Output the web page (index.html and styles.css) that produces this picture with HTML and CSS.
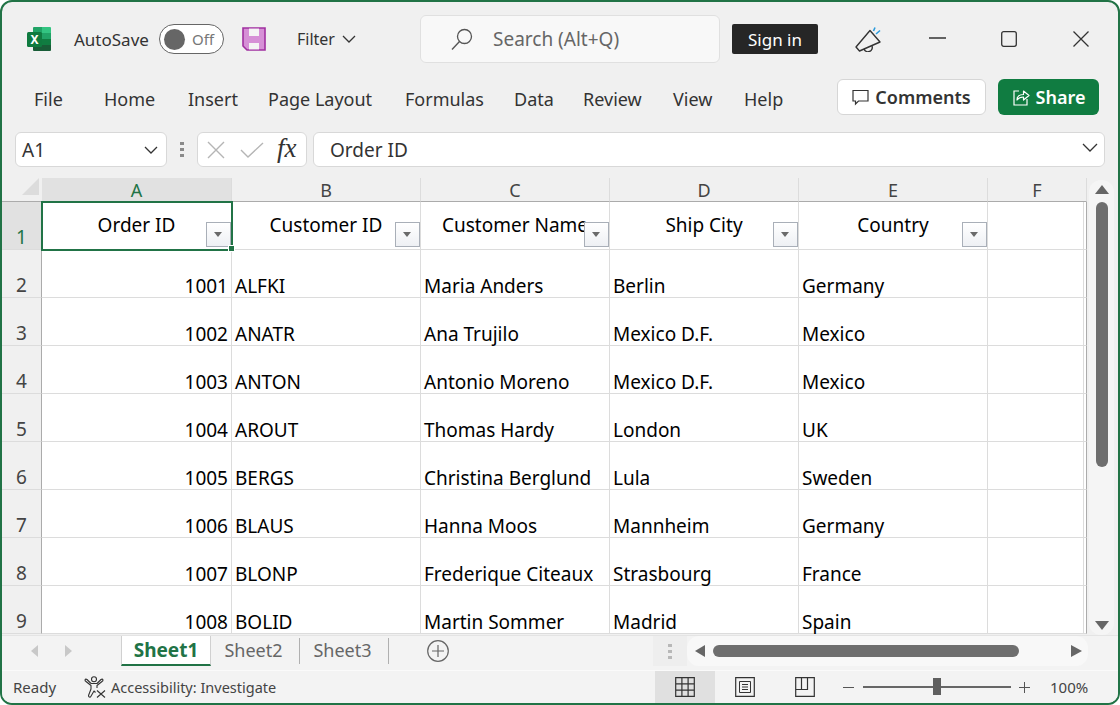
FILE: index.html
```html
<!DOCTYPE html>
<html lang="en">
<head>
    <meta charset="UTF-8">
    <meta name="viewport" content="width=device-width, initial-scale=1.0">
    <title>Excel</title>
    <link rel="stylesheet" href="styles.css">
</head>
<body>
<div class="window">

    <!-- Title bar -->
    <div class="title-bar">
        <svg class="logo" width="24" height="24" viewBox="0 0 24 24">
            <path d="M7 0H15V6H6V1Q6 0 7 0Z" fill="#21a366"/>
            <path d="M15 0H23Q24 0 24 1V6H15Z" fill="#33c481"/>
            <rect x="6" y="6" width="9" height="6" fill="#107c41"/>
            <rect x="15" y="6" width="9" height="6" fill="#21a366"/>
            <rect x="6" y="12" width="9" height="6" fill="#185c37"/>
            <rect x="15" y="12" width="9" height="6" fill="#107c41"/>
            <path d="M6 18H24V23Q24 24 23 24H7Q6 24 6 23Z" fill="#185c37"/>
            <rect x="0" y="5" width="15" height="15" rx="1.5" fill="#0f7a3f"/>
            <text x="7.5" y="17" text-anchor="middle" class="logo-x">X</text>
        </svg>
        <span class="autosave">AutoSave</span>
        <div class="toggle"><span class="toggle-knob"></span><span class="toggle-text">Off</span></div>
        <svg class="save" width="24" height="24" viewBox="0 0 24 24">
            <path d="M1 1H23V23H5L1 19Z" fill="#d690d6" stroke="#a02fa0" stroke-width="1.6"/>
            <rect x="7" y="1.6" width="10" height="7.4" fill="#f4f4f4"/>
            <rect x="7" y="16" width="10" height="6.4" fill="#f4f4f4"/>
        </svg>
        <span class="filter">Filter</span>
        <svg class="filter-arrow" width="14" height="8" viewBox="0 0 14 8"><path d="M1 1L7 7L13 1" fill="none" stroke="#333" stroke-width="1.3"/></svg>
        <div class="search">
            <svg width="22" height="23" viewBox="0 0 22 23"><circle cx="13.5" cy="8.5" r="7" fill="none" stroke="#555" stroke-width="1.3"/><path d="M8.5 13.5L1 21.5" stroke="#555" stroke-width="1.4"/></svg>
            <span>Search (Alt+Q)</span>
        </div>
        <button class="sign-in">Sign in</button>
        <svg class="mega" width="26" height="26" viewBox="0 0 26 26">
            <path d="M15 4.500L25 16L4.500 25L1 21Z" fill="none" stroke="#333" stroke-width="1.4" stroke-linejoin="round"/>
            <path d="M9 23A4 4 0 0 0 17 20" fill="none" stroke="#333" stroke-width="1.4"/>
            <path d="M18.500 5L20 1.500M21 8L25 4.500" stroke="#2b9bdc" stroke-width="1.6"/>
        </svg>
        <svg class="win-min" width="17" height="2" viewBox="0 0 17 2"><path d="M0 1H17" stroke="#333" stroke-width="1.3"/></svg>
        <svg class="win-max" width="16" height="16" viewBox="0 0 16 16"><rect x=".7" y=".7" width="14.6" height="14.6" rx="2" fill="none" stroke="#333" stroke-width="1.3"/></svg>
        <svg class="win-close" width="16" height="16" viewBox="0 0 16 16"><path d="M.5 .5L15.5 15.5M15.5 .5L.5 15.5" stroke="#333" stroke-width="1.3"/></svg>
    </div>

    <!-- Ribbon tabs -->
    <div class="ribbon">
        <span class="tab tab-file">File</span>
        <span class="tab tab-home">Home</span>
        <span class="tab tab-insert">Insert</span>
        <span class="tab tab-layout">Page Layout</span>
        <span class="tab tab-formulas">Formulas</span>
        <span class="tab tab-data">Data</span>
        <span class="tab tab-review">Review</span>
        <span class="tab tab-view">View</span>
        <span class="tab tab-help">Help</span>
        <button class="comments">
            <svg width="17" height="17" viewBox="0 0 17 17"><path d="M1 1.500H16V12H6.500L3.500 15V12H1Z" fill="none" stroke="#333" stroke-width="1.2"/></svg>
            Comments
        </button>
        <button class="share">
            <svg width="18" height="18" viewBox="0 0 18 18"><path d="M7 3H2V17H15V11" fill="none" stroke="#fff" stroke-width="1.2"/><path d="M5 12C5 8 8 6.500 11.500 6.500V3L17 7.500L11.500 12V9C9 9 6.500 10 5 12Z" fill="none" stroke="#fff" stroke-width="1.2" stroke-linejoin="round"/></svg>
            Share
        </button>
    </div>

    <!-- Formula bar -->
    <div class="formula-bar">
        <div class="name-box">
            <span>A1</span>
            <svg width="14" height="8" viewBox="0 0 14 8"><path d="M1 1L7 7L13 1" fill="none" stroke="#333" stroke-width="1.3"/></svg>
        </div>
        <div class="grip"><i></i><i></i><i></i></div>
        <div class="fx-box">
            <svg width="18" height="18" viewBox="0 0 18 18"><path d="M1 1L17 17M17 1L1 17" stroke="#b5b5b5" stroke-width="1.4"/></svg>
            <svg class="fx-check" width="24" height="16" viewBox="0 0 24 16"><path d="M1 8L8 15L23 1" fill="none" stroke="#b5b5b5" stroke-width="1.4"/></svg>
            <span class="fx">fx</span>
        </div>
        <div class="formula-input">
            <span>Order ID</span>
            <svg width="16" height="9" viewBox="0 0 16 9"><path d="M1 1L8 8L15 1" fill="none" stroke="#333" stroke-width="1.3"/></svg>
        </div>
    </div>

    <!-- Sheet -->
    <div class="sheet">
        <div class="grid-wrap">
            <table class="grid">
                <colgroup>
                    <col class="col-row"><col class="col-a"><col class="col-std"><col class="col-std"><col class="col-std"><col class="col-std"><col class="col-f">
                </colgroup>
                <tr class="col-heads">
                    <th class="corner"><span class="corner-mark"></span></th>
                    <th class="active">A</th><th>B</th><th>C</th><th>D</th><th>E</th><th>F</th>
                </tr>
                <tr class="head-row">
                    <th class="row-head active">1</th>
                    <td class="selected">Order ID<span class="drop"></span><span class="handle"></span></td>
                    <td>Customer ID<span class="drop"></span></td>
                    <td>Customer Name<span class="drop"></span></td>
                    <td>Ship City<span class="drop"></span></td>
                    <td>Country<span class="drop"></span></td>
                    <td></td>
                </tr>
                <tr><th class="row-head">2</th><td class="num">1001</td><td>ALFKI</td><td>Maria Anders</td><td>Berlin</td><td>Germany</td><td></td></tr>
                <tr><th class="row-head">3</th><td class="num">1002</td><td>ANATR</td><td>Ana Trujilo</td><td>Mexico D.F.</td><td>Mexico</td><td></td></tr>
                <tr><th class="row-head">4</th><td class="num">1003</td><td>ANTON</td><td>Antonio Moreno</td><td>Mexico D.F.</td><td>Mexico</td><td></td></tr>
                <tr><th class="row-head">5</th><td class="num">1004</td><td>AROUT</td><td>Thomas Hardy</td><td>London</td><td>UK</td><td></td></tr>
                <tr><th class="row-head">6</th><td class="num">1005</td><td>BERGS</td><td>Christina Berglund</td><td>Lula</td><td>Sweden</td><td></td></tr>
                <tr><th class="row-head">7</th><td class="num">1006</td><td>BLAUS</td><td>Hanna Moos</td><td>Mannheim</td><td>Germany</td><td></td></tr>
                <tr><th class="row-head">8</th><td class="num">1007</td><td>BLONP</td><td>Frederique Citeaux</td><td>Strasbourg</td><td>France</td><td></td></tr>
                <tr><th class="row-head">9</th><td class="num">1008</td><td>BOLID</td><td>Martin Sommer</td><td>Madrid</td><td>Spain</td><td></td></tr>
            </table>
        </div>
        <div class="v-scroll">
            <span class="arrow-up"></span>
            <span class="v-thumb"></span>
            <span class="arrow-down"></span>
        </div>
    </div>

    <!-- Sheet tabs -->
    <div class="tab-bar">
        <div class="sheet-nav"><span class="nav-left"></span><span class="nav-right"></span></div>
        <span class="sheet-tab current">Sheet1</span>
        <span class="sheet-tab">Sheet2</span>
        <span class="sheet-tab">Sheet3</span>
        <svg class="add-sheet" width="22" height="22" viewBox="0 0 22 22"><circle cx="11" cy="11" r="10.300" fill="none" stroke="#666" stroke-width="1.2"/><path d="M11 5V17M5 11H17" stroke="#666" stroke-width="1.2"/></svg>
        <div class="split"><div class="grip grip-light"><i></i><i></i><i></i></div></div>
        <div class="h-scroll">
            <span class="nav-left dark"></span>
            <span class="h-thumb"></span>
            <span class="nav-right dark"></span>
        </div>
    </div>

    <!-- Status bar -->
    <div class="status-bar">
        <span class="ready">Ready</span>
        <svg class="a11y" width="22" height="22" viewBox="0 0 22 22">
            <circle cx="10" cy="3.200" r="2.500" fill="none" stroke="#333" stroke-width="1.100"/>
            <path d="M7 7.500L3 3.500Q1.500 2.500 1 4Q1 5 2 5.500L7 9.500V13L4.500 19.500Q4.500 21.500 6.500 21L10 15L11.500 16.500M13 7.500L17 3.500Q18.500 2.500 19 4Q19 5 18 5.500L13 9.500V12M7 7.500H13" fill="none" stroke="#333" stroke-width="1.100" stroke-linejoin="round"/>
            <path d="M13 14.500L21 21.500M21 14.500L13 21.500" stroke="#333" stroke-width="1.100"/>
        </svg>
        <span class="a11y-text">Accessibility: Investigate</span>
        <div class="view-btn current">
            <svg width="20" height="20" viewBox="0 0 20 20"><path d="M.7 .7H19.300V19.300H.7ZM.7 6.900H19.300M.7 13.100H19.300M6.900 .7V19.300M13.100 .7V19.300" fill="none" stroke="#333" stroke-width="1.200"/></svg>
        </div>
        <div class="view-btn">
            <svg width="20" height="20" viewBox="0 0 20 20"><path d="M.7 .7H19.300V19.300H.7Z" fill="none" stroke="#333" stroke-width="1.200"/><path d="M4.500 4.500H15.500V15.500H4.500ZM7 7.500H13M7 10H13M7 12.500H13" fill="none" stroke="#333"/></svg>
        </div>
        <div class="view-btn">
            <svg width="20" height="20" viewBox="0 0 20 20"><path d="M.7 .7H19.300V19.300H.7ZM.7 12.500H12.500V.7M6.500 .7V12.500" fill="none" stroke="#333" stroke-width="1.200"/></svg>
        </div>
        <span class="zoom-minus"></span>
        <div class="zoom-track"><span class="zoom-thumb"></span></div>
        <span class="zoom-plus"></span>
        <span class="zoom-value">100%</span>
    </div>

</div>
</body>
</html>
```

FILE: styles.css
```css
* {
    box-sizing: border-box;
}

body {
    margin: 0;
    font-family: "Noto Sans", sans-serif;
    color: #333;
    background: #fff;
}

button {
    font-family: inherit;
    border: none;
    padding: 0;
}

.window {
    width: 1120px;
    height: 705px;
    border: 2px solid #217346;
    border-radius: 12px;
    background: #f0f0f0;
    display: flex;
    flex-direction: column;
    overflow: hidden;
}

/* Title bar */
.title-bar {
    height: 74px;
    flex: none;
    display: flex;
    align-items: center;
    font-size: 17px;
}

.logo {
    margin-left: 25px;
}

.logo-x {
    font-family: "Noto Sans", sans-serif;
    font-size: 12px;
    font-weight: 700;
    fill: #fff;
}

.autosave {
    margin-left: 23px;
    width: 77px;
    white-space: nowrap;
}

.toggle {
    margin-left: 8px;
    width: 65px;
    height: 30px;
    background: #fff;
    border: 1px solid #666;
    border-radius: 15px;
    display: flex;
    align-items: center;
    padding-left: 4px;
}

.toggle-knob {
    width: 21px;
    height: 21px;
    border-radius: 50%;
    background: #666;
}

.toggle-text {
    margin-left: 7px;
    font-size: 15px;
    color: #777;
}

.save {
    margin-left: 18px;
}

.filter {
    margin-left: 31px;
    width: 38px;
    font-size: 16px;
    white-space: nowrap;
}

.filter-arrow {
    margin-left: 7px;
}

.search {
    margin-left: 64px;
    width: 300px;
    height: 48px;
    background: #f8f8f8;
    border: 1px solid #e0e0e0;
    border-radius: 6px;
    display: flex;
    align-items: center;
    padding-left: 30px;
    font-size: 19px;
    color: #666;
}

.search span {
    margin-left: 20px;
}

.sign-in {
    margin-left: 12px;
    width: 86px;
    height: 30px;
    background: #262626;
    color: #fff;
    font-size: 17px;
    border-radius: 2px;
}

.mega {
    margin-left: 37px;
}

.win-min {
    margin-left: 48px;
    margin-top: -2px;
}

.win-max {
    margin-left: 55px;
}

.win-close {
    margin-left: 56px;
}

/* Ribbon */
.ribbon {
    height: 38px;
    margin-top: 2px;
    flex: none;
    display: flex;
    align-items: center;
    padding-left: 32px;
    font-size: 18px;
}

.tab {
    white-space: nowrap;
    margin-top: 3px;
}

.tab-file { width: 70px; }
.tab-home { width: 84px; }
.tab-insert { width: 80px; }
.tab-layout { width: 137px; }
.tab-formulas { width: 109px; }
.tab-data { width: 69px; }
.tab-review { width: 90px; }
.tab-view { width: 71px; }
.tab-help { width: 93px; }

.comments,
.share {
    height: 36px;
    border-radius: 6px;
    display: flex;
    align-items: center;
    justify-content: center;
    gap: 6px;
    font-size: 18px;
    font-weight: 600;
}

.comments {
    width: 149px;
    background: #fff;
    border: 1px solid #d6d6d6;
    color: #333;
}

.share {
    width: 101px;
    margin-left: 12px;
    background: #107c41;
    color: #fff;
}

/* Formula bar */
.formula-bar {
    height: 35px;
    flex: none;
    margin-top: 16px;
    margin-bottom: 11px;
    display: flex;
    align-items: center;
    padding-left: 13px;
    font-size: 19px;
}

.name-box,
.fx-box,
.formula-input {
    height: 35px;
    background: #fff;
    border: 1px solid #d8d8d8;
    border-radius: 6px;
    display: flex;
    align-items: center;
}

.name-box {
    width: 152px;
    padding: 0 8px 0 6px;
    justify-content: space-between;
}

.grip {
    width: 4px;
    margin: 0 13px;
    display: flex;
    flex-direction: column;
    gap: 3px;
}

.grip i {
    display: block;
    width: 4px;
    height: 3px;
    background: #8a8a8a;
}

.grip-light i {
    background: #b8b8b8;
}

.fx-box {
    width: 110px;
    padding-left: 9px;
}

.fx-check {
    margin-left: 15px;
}

.fx {
    margin-left: 13px;
    font-family: "Liberation Serif", serif;
    font-style: italic;
    font-size: 27px;
    line-height: 1;
    margin-top: -3px;
}

.formula-input {
    width: 792px;
    margin-left: 6px;
    padding: 0 6px 0 16px;
    justify-content: space-between;
}

.formula-input svg {
    margin-top: -4px;
}

/* Sheet */
.sheet {
    height: 457px;
    flex: none;
    display: flex;
}

.grid-wrap {
    width: 1085px;
    height: 457px;
    overflow: hidden;
    background: #f0f0f0;
}

.grid {
    border-collapse: separate;
    border-spacing: 0;
    table-layout: fixed;
    width: 1085px;
    font-size: 19px;
    color: #000;
}

.col-row { width: 40px; }
.col-a { width: 190px; }
.col-std { width: 189px; }
.col-f { width: 99px; }

.col-heads th {
    height: 24px;
    padding: 0;
    font-weight: 400;
    font-size: 18px;
    color: #444;
    border-bottom: 1px solid #ababab;
    border-right: 1px solid #dcdcdc;
    text-align: center;
    line-height: 22px;
}

.col-heads th.corner {
    position: relative;
    border-right: none;
}

.corner-mark {
    position: absolute;
    left: 20px;
    top: 0;
    width: 0;
    height: 0;
    border-left: 17px solid transparent;
    border-bottom: 17px solid #dcdcdc;
}

.col-heads th.active {
    background: #e1e1e1;
    color: #217346;
}

.row-head {
    height: 48px;
    padding: 0;
    font-weight: 400;
    font-size: 19px;
    color: #444;
    text-align: center;
    vertical-align: bottom;
    border-right: 1px solid #ababab;
    border-bottom: 1px solid #dcdcdc;
    line-height: 24px;
}

.row-head.active {
    background: #e1e1e1;
    color: #217346;
}

.grid td {
    position: relative;
    height: 48px;
    padding: 0 3px;
    background: #fff;
    border-right: 1px solid #dcdcdc;
    border-bottom: 1px solid #dcdcdc;
    vertical-align: bottom;
    white-space: nowrap;
    overflow: visible;
    line-height: 22px;
}

.grid td:last-child {
    border-right: 1px solid #ababab;
    box-shadow: inset -2px 0 0 #fff, inset -3px 0 0 #dcdcdc;
}

.grid td.num {
    text-align: right;
}

.head-row td {
    text-align: center;
    vertical-align: top;
    padding-top: 12px;
}

.grid td.selected {
    outline: 2px solid #217346;
    outline-offset: -1px;
    z-index: 1;
}

.drop {
    position: absolute;
    right: 0;
    bottom: 2px;
    width: 25px;
    height: 25px;
    background: linear-gradient(#fff, #eef0f4);
    border: 1px solid #a9afb8;
}

.drop::after {
    content: "";
    position: absolute;
    left: 7px;
    top: 9px;
    border-left: 4px solid transparent;
    border-right: 4px solid transparent;
    border-top: 5px solid #6a6a6a;
}

.handle {
    position: absolute;
    right: -4px;
    bottom: -3px;
    width: 5px;
    height: 5px;
    background: #217346;
    border: 1px solid #fff;
    box-sizing: content-box;
}

/* Scrollbars */
.v-scroll {
    flex: 1;
    margin: 2px 4px 0 2px;
    padding-top: 5px;
    background: #f5f5f5;
    border-radius: 12px;
    display: flex;
    flex-direction: column;
    align-items: center;
}

.arrow-up {
    border-left: 7px solid transparent;
    border-right: 7px solid transparent;
    border-bottom: 9px solid #666;
}

.v-thumb {
    width: 12px;
    height: 265px;
    margin-top: 8px;
    background: #6e6e6e;
    border-radius: 6px;
}

.arrow-down {
    margin-top: 154px;
    border-left: 7px solid transparent;
    border-right: 7px solid transparent;
    border-top: 9px solid #666;
}

/* Sheet tabs */
.tab-bar {
    height: 35px;
    flex: none;
    display: flex;
    align-items: center;
    padding-bottom: 4px;
    background: #f3f3f3;
    border-top: 1px solid #e4e4e4;
    font-size: 18px;
    color: #666;
}

.sheet-nav {
    width: 119px;
    padding-left: 29px;
    display: flex;
    gap: 27px;
}

.nav-left,
.nav-right {
    width: 0;
    height: 0;
    border-top: 6px solid transparent;
    border-bottom: 6px solid transparent;
}

.nav-left {
    border-right: 7px solid #c8c8c8;
}

.nav-right {
    border-left: 7px solid #c8c8c8;
}

.nav-left.dark {
    border-right: 10px solid #666;
}

.nav-right.dark {
    border-left: 11px solid #666;
}

.sheet-tab {
    width: 89px;
    height: 26px;
    padding-right: 3px;
    line-height: 24px;
    text-align: center;
    border-right: 1px solid #b0b0b0;
}

.sheet-tab.current {
    width: 90px;
    height: 30px;
    padding-right: 0;
    line-height: 28px;
    background: #fff;
    border-left: 1px solid #d0d0d0;
    border-right: 1px solid #d0d0d0;
    border-bottom: 2px solid #217346;
    color: #217346;
    font-size: 19px;
    font-weight: 700;
}

.add-sheet {
    margin-left: 38px;
}

.split {
    margin-left: 204px;
    width: 34px;
    height: 30px;
    background: #eeeeee;
    display: flex;
    align-items: center;
    justify-content: center;
}

.split .grip {
    margin: 0;
}

.h-scroll {
    width: 401px;
    height: 30px;
    background: #f8f8f8;
    border-radius: 12px;
    display: flex;
    align-items: center;
    padding-left: 8px;
}

.h-thumb {
    width: 306px;
    height: 12px;
    margin-left: 8px;
    margin-right: 52px;
    background: #6e6e6e;
    border-radius: 6px;
}

/* Status bar */
.status-bar {
    height: 33px;
    flex: none;
    display: flex;
    align-items: center;
    background: #f3f3f3;
    border-top: 1px solid #fafafa;
    font-size: 15px;
    color: #444;
}

.ready {
    margin-left: 11px;
    width: 71px;
}

.a11y-text {
    margin-left: 5px;
    width: 544px;
    font-size: 14.500px;
    white-space: nowrap;
}

.view-btn {
    width: 60px;
    height: 32px;
    display: flex;
    align-items: center;
    justify-content: center;
}

.view-btn.current {
    background: #e0e0e0;
}

.zoom-minus,
.zoom-plus {
    position: relative;
    width: 11px;
    height: 1px;
    background: #555;
}

.zoom-minus {
    margin-left: 8px;
}

.zoom-plus::after {
    content: "";
    position: absolute;
    left: 5px;
    top: -5px;
    width: 1px;
    height: 11px;
    background: #555;
}

.zoom-track {
    position: relative;
    width: 148px;
    height: 2px;
    margin: 0 8px 0 9px;
    background: #666;
}

.zoom-thumb {
    position: absolute;
    left: 70px;
    top: -8px;
    width: 8px;
    height: 17px;
    background: #5f5f5f;
}

.zoom-value {
    margin-left: 20px;
}
```
